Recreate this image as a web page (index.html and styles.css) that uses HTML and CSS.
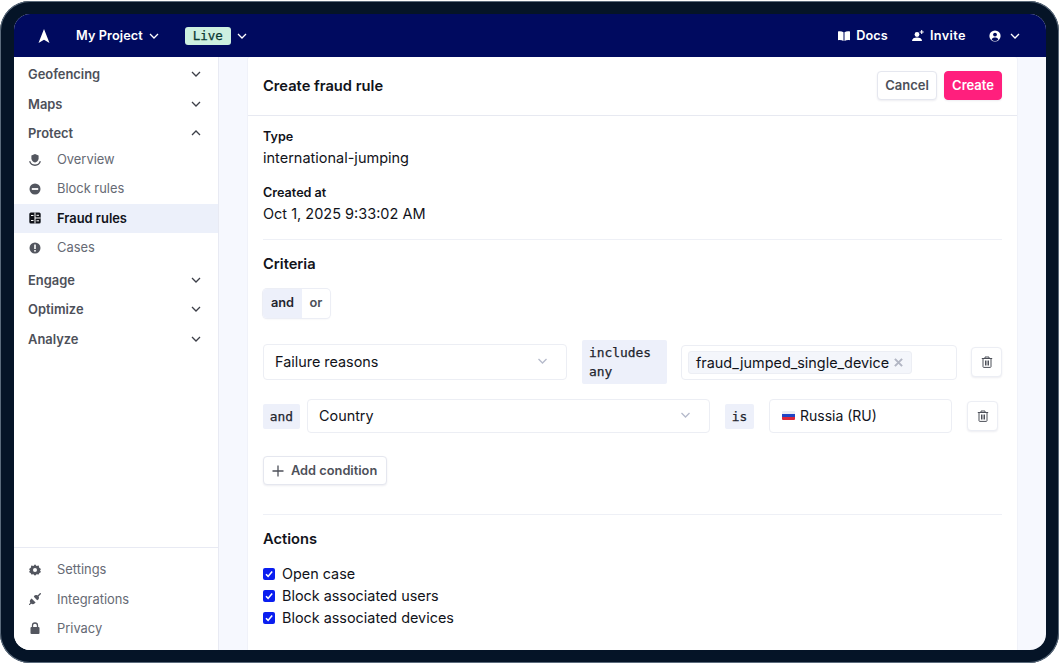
FILE: index.html
```html
<!DOCTYPE html>
<html lang="en">
<head>
<meta charset="utf-8">
<title>Create fraud rule</title>
<link rel="stylesheet" href="styles.css">
</head>
<body>
<div class="device">
  <div class="screen">
    <header class="topbar">
      <svg class="logo" viewBox="0 0 12 14" width="12" height="14"><path d="M6 0L11.500 14L6 10.800L.5 14Z" fill="#fff"/></svg>
      <span class="top-label project">My Project</span>
      <svg class="chev white" viewBox="0 0 10 6"><path d="M1 1l4 4 4-4"/></svg>
      <span class="live">Live</span>
      <svg class="chev white" viewBox="0 0 10 6"><path d="M1 1l4 4 4-4"/></svg>
      <span class="spacer"></span>
      <svg class="top-icon" viewBox="0 0 12 10" width="12" height="10"><path d="M0 .5C2 0 4 .3 5.500 1.200V10C4 9.200 2 8.900 0 9.300ZM12 .5C10 0 8 .3 6.500 1.200V10C8 9.200 10 8.900 12 9.300Z" fill="#fff"/></svg>
      <span class="top-label docs">Docs</span>
      <svg class="top-icon" viewBox="0 0 12 12" width="12" height="12"><circle cx="5" cy="4.500" r="2.400" fill="#fff"/><path d="M0 11c0-2.600 2.200-3.600 5-3.600s5 1 5 3.600Z" fill="#fff"/><path d="M9.700 0v4M7.700 2h4" stroke="#fff" stroke-width="1.100"/></svg>
      <span class="top-label invite">Invite</span>
      <svg class="top-icon user" viewBox="0 0 12 12" width="12" height="12"><circle cx="6" cy="6" r="5.600" fill="#fff"/><circle cx="6" cy="4.600" r="1.900" fill="#000a5f"/><path d="M2.600 9.500c.6-1.500 2-2 3.400-2s2.800.5 3.400 2A4.500 4.500 0 0 1 6 11a4.500 4.500 0 0 1-3.400-1.500Z" fill="#000a5f"/></svg>
      <svg class="chev white" viewBox="0 0 10 6"><path d="M1 1l4 4 4-4"/></svg>
    </header>
    <div class="body">
      <aside class="sidebar">
        <nav class="nav">
          <div class="group"><span>Geofencing</span><svg class="chev gray" viewBox="0 0 10 6"><path d="M1 1l4 4 4-4"/></svg></div>
          <div class="group tight"><span>Maps</span><svg class="chev gray" viewBox="0 0 10 6"><path d="M1 1l4 4 4-4"/></svg></div>
          <div class="group open"><span>Protect</span><svg class="chev gray" viewBox="0 0 10 6"><path d="M1 5l4-4 4 4"/></svg></div>
          <a class="item">
            <svg class="ni" viewBox="0 0 12 12"><path d="M6 0L9.600 1.400V4.500C9.600 6.400 8 7.800 6 8.600 4 7.800 2.400 6.400 2.400 4.500V1.400Z" fill="#53565f"/><path d="M.6 7.200C1.400 9.800 3.400 11.200 6 11.200S10.600 9.800 11.400 7.200" fill="none" stroke="#53565f" stroke-width="1.400"/></svg>
            <span>Overview</span></a>
          <a class="item">
            <svg class="ni" viewBox="0 0 12 12"><circle cx="6" cy="6" r="5.500" fill="#53565f"/><rect x="2.800" y="5.100" width="6.400" height="1.800" fill="#fff"/></svg>
            <span>Block rules</span></a>
          <a class="item active">
            <svg class="ni" viewBox="0 0 12 12"><rect x=".3" y=".5" width="11.400" height="11" rx="1.500" fill="#11131a"/><path d="M6 .5v11M6 6h5.700M2 3.500h2.500M7.500 3.300H10M7.500 8.800H10M2 8.500h2.500" stroke="#fff" stroke-width="1"/></svg>
            <span>Fraud rules</span></a>
          <a class="item last">
            <svg class="ni" viewBox="0 0 12 12"><circle cx="6" cy="6" r="5.500" fill="#53565f"/><rect x="5.200" y="2.500" width="1.600" height="4.500" fill="#fff"/><rect x="5.200" y="8" width="1.600" height="1.600" fill="#fff"/></svg>
            <span>Cases</span></a>
          <div class="group tight"><span>Engage</span><svg class="chev gray" viewBox="0 0 10 6"><path d="M1 1l4 4 4-4"/></svg></div>
          <div class="group"><span>Optimize</span><svg class="chev gray" viewBox="0 0 10 6"><path d="M1 1l4 4 4-4"/></svg></div>
          <div class="group"><span>Analyze</span><svg class="chev gray" viewBox="0 0 10 6"><path d="M1 1l4 4 4-4"/></svg></div>
        </nav>
        <div class="side-foot">
          <a class="item">
            <svg class="ni" viewBox="0 0 12 12"><path d="M6 .3l1.500 1.600 2.200-.3.500 2.100L12 5 11 6.500 12 8l-1.800 1.300-.5 1.100-2.200-.1L6 11.700 4.500 10.300l-2.200.1-.5-1.100L0 8l1-1.500L0 5l1.800-1.300.5-2.100 2.200.3Z" fill="#53565f"/><circle cx="6" cy="6" r="2" fill="#fff"/></svg>
            <span>Settings</span></a>
          <a class="item">
            <svg class="ni" viewBox="0 0 12 12"><path d="M0 12l2.500-2.500" stroke="#53565f" stroke-width="1.100"/><path d="M1.800 6.200a2.600 2.600 0 0 0 4 4l.8-.8-4-4Z" fill="#53565f"/><path d="M4.800 3.800L8.200 7.200a2.600 2.600 0 0 0 1-4.400 2.600 2.600 0 0 0-4.400 1Z" fill="#53565f"/><path d="M9 3l2.700-2.700" stroke="#53565f" stroke-width="1.300"/></svg>
            <span>Integrations</span></a>
          <a class="item">
            <svg class="ni" viewBox="0 0 12 12"><rect x="1.500" y="5" width="9" height="7" rx="1" fill="#53565f"/><path d="M3.500 5.500V3.500a2.500 2.500 0 0 1 5 0v2" fill="none" stroke="#53565f" stroke-width="1.300"/></svg>
            <span>Privacy</span></a>
        </div>
      </aside>
      <main class="main">
        <section class="card">
          <div class="card-head">
            <h1>Create fraud rule</h1>
            <div class="head-actions">
              <button class="btn cancel">Cancel</button>
              <button class="btn primary">Create</button>
            </div>
          </div>
          <div class="card-body">
            <div class="field-label">Type</div>
            <div class="field-value">international-jumping</div>
            <div class="field-label second">Created at</div>
            <div class="field-value">Oct 1, 2025 9:33:02 AM</div>
            <hr class="rule rule-a">
            <h2>Criteria</h2>
            <div class="toggle"><span class="on">and</span><span class="off">or</span></div>
            <div class="cond cond-1">
              <div class="select s1"><span>Failure reasons</span><svg class="chev pale" viewBox="0 0 10 6"><path d="M1 1l4 4 4-4"/></svg></div>
              <div class="op op-wide">includes any</div>
              <div class="input tags"><span class="tag">fraud_jumped_single_device<svg viewBox="0 0 8 8" width="9" height="9"><path d="M.8.8l6.400 6.400M7.200.8L.8 7.200"/></svg></span></div>
              <button class="trash"><svg viewBox="0 0 12 12" width="12" height="12"><path d="M.8 2.500h10.400M4 2.300V1h4v1.300M2 2.500v8.200c0 .4.300.7.700.7h6.600c.4 0 .7-.3.700-.7V2.500M4.500 4.500v5M6 4.500v5M7.500 4.500v5"/></svg></button>
            </div>
            <div class="cond cond-2">
              <div class="op and">and</div>
              <div class="select s2"><span>Country</span><svg class="chev pale" viewBox="0 0 10 6"><path d="M1 1l4 4 4-4"/></svg></div>
              <div class="op is">is</div>
              <div class="input country"><svg class="flag" viewBox="0 0 13 9" width="13" height="9"><rect width="13" height="3" fill="#e9edf4"/><rect y="3" width="13" height="3" fill="#1f44c4"/><rect y="6" width="13" height="3" fill="#d9263a"/></svg><span>Russia (RU)</span></div>
              <button class="trash"><svg viewBox="0 0 12 12" width="12" height="12"><path d="M.8 2.500h10.400M4 2.300V1h4v1.300M2 2.500v8.200c0 .4.300.7.700.7h6.600c.4 0 .7-.3.700-.7V2.500M4.500 4.500v5M6 4.500v5M7.500 4.500v5"/></svg></button>
            </div>
            <button class="btn add"><svg viewBox="0 0 12 12" width="12" height="12"><path d="M6 .5v11M.5 6h11"/></svg><span>Add condition</span></button>
            <hr class="rule rule-b">
            <h2 class="actions">Actions</h2>
            <label class="check"><span class="box"><svg viewBox="0 0 12 12" width="12" height="12"><path d="M3 6.300l2.100 2.100L9.200 3.600"/></svg></span>Open case</label>
            <label class="check"><span class="box"><svg viewBox="0 0 12 12" width="12" height="12"><path d="M3 6.300l2.100 2.100L9.200 3.600"/></svg></span>Block associated users</label>
            <label class="check"><span class="box"><svg viewBox="0 0 12 12" width="12" height="12"><path d="M3 6.300l2.100 2.100L9.200 3.600"/></svg></span>Block associated devices</label>
          </div>
        </section>
      </main>
    </div>
  </div>
</div>
</body>
</html>
```
FILE: styles.css
```css
* { box-sizing: border-box; }
html, body { margin: 0; height: 100%; background: #fff; overflow: hidden; }
body { font-family: Inter, "Liberation Sans", sans-serif; color: #11131a; }
.device {
  width: 1059px; height: 662px; margin-top: 1px;
  background: #051427; border-radius: 30px; padding: 13px 13px 13px 14px;
  box-shadow: inset 0 0 0 1px #5b6b7c;
}
.screen { height: 636px; border-radius: 16px; overflow: hidden; background: #f6f8fe; display: flex; flex-direction: column; }
.topbar { height: 43px; flex: none; background: #000a5f; display: flex; align-items: center; padding: 0 26px 0 24px; color: #fff; }
.logo { flex: none; }
.top-label { font-size: 12.700px; font-weight: 600; letter-spacing: .1px; }
.project { margin-left: 26px; }
.chev { width: 10px; height: 6px; flex: none; fill: none; stroke-width: 1.300; }
.chev.white { stroke: #fff; margin-left: 6px; }
.live { margin-left: 26px; width: 46px; height: 18px; background: #cdf0e0; border-radius: 3px; color: #0b3a33; font: 12.500px/18px "DejaVu Sans Mono", monospace; -webkit-text-stroke: .25px #0b3a33; text-align: center; }
.spacer { flex: 1; }
.top-icon { flex: none; }
.docs { margin-left: 6px; }
.top-icon + .invite { margin-left: 6px; letter-spacing: .4px; }
.docs + .top-icon { margin-left: 24px; }
.invite + .user { margin-left: 23px; }
.user + .chev { margin-left: 9px; }
.body { flex: 1; display: flex; min-height: 0; }
.sidebar { width: 205px; flex: none; background: #fff; border-right: 1px solid #e8eaf3; display: flex; flex-direction: column; justify-content: space-between; }
.nav { padding-top: 5px; }
.group { height: 24px; margin-bottom: 6px; display: flex; align-items: center; justify-content: space-between; padding: 0 17px 0 14px; font-size: 12.900px; font-weight: 600; color: #4d5059; }
.group.tight { margin-bottom: 5px; }
.group.open { margin-bottom: 0; }
.item { height: 29.300px; display: flex; align-items: center; padding-left: 15px; font-size: 12.900px; color: #666a74; }
.item.last { margin-bottom: 6px; }
.item.active { background: #ecf0fa; color: #11131a; font-weight: 600; }
.chev.gray { stroke: #3c3f48; }
.ni { width: 12px; height: 12px; flex: none; margin-right: 16px; }
.side-foot { border-top: 1px solid #e8eaf3; padding: 7px 0; }
.main { flex: 1; padding: 0 29px; min-width: 0; overflow: hidden; }
.card { background: #fff; border-radius: 3px 3px 0 0; box-shadow: 0 0 0 1px #f0f2f9; height: 100%; overflow: hidden; }
.card-head { height: 59px; border-bottom: 1px solid #e7e9f1; display: flex; align-items: center; justify-content: space-between; padding: 0 15px; }
h1 { margin: 0; font-size: 14.700px; font-weight: 600; }
.head-actions { display: flex; gap: 7px; margin-top: -2px; }
.btn { height: 29px; padding: 0; border: 1px solid #e5e7ef; border-radius: 4px; background: #fff; color: #4d5059; font: 600 13px Inter, sans-serif; box-shadow: 0 1px 2px rgba(20,30,80,.08); }
.cancel { width: 60px; }
.btn.primary { width: 58px; background: #ff1f7d; border-color: #ff1f7d; color: #fff; }
.card-body { padding: 13px 15px 0; }
.field-label { font-size: 12.600px; font-weight: 600; line-height: 15px; }
.field-value { font-size: 14.500px; line-height: 18px; margin-top: 5px; }
.field-label.second { margin-top: 18px; }
.rule { margin: 0; border: 0; border-top: 1px solid #eef0f6; }
.rule-a { margin-top: 16px; }
h2 { margin: 16px 0 0; font-size: 14.700px; font-weight: 600; line-height: 17px; }
.toggle { margin-top: 16px; display: inline-flex; height: 29px; border-radius: 4px; background: #fff; box-shadow: 0 0 0 1px #eceef5, 0 1px 2px rgba(20,30,80,.08); font-size: 12.800px; font-weight: 600; color: #4d5059; vertical-align: top; overflow: hidden; }
.toggle span { line-height: 28px; text-align: center; }
.toggle .on { width: 39px; background: #edf0fa; color: #23252e; }
.toggle .off { width: 28px; }
.cond { display: flex; align-items: center; }
.cond-1 { margin-top: 22px; height: 44px; }
.cond-2 { margin-top: 15px; height: 34px; }
.select { height: 36px; border: 1px solid #eceef4; border-radius: 4px; display: flex; align-items: center; justify-content: space-between; padding: 0 18px 2px 11px; font-size: 14.400px; background: #fff; }
.chev.pale { stroke: #b5bacb; width: 11px; height: 6px; }
.s1 { width: 304px; }
.s2 { width: 403px; height: 34px; margin-left: 7px; }
.op { background: #edf0fa; font: 12.900px/19px "DejaVu Sans Mono", "Liberation Mono", monospace; -webkit-text-stroke: .25px #23252e; color: #23252e; border-radius: 2px; }
.op-wide { width: 85px; height: 44px; margin-left: 15px; padding: 3px 7px; }
.and { width: 37px; height: 25px; line-height: 25px; text-align: center; }
.is { width: 29px; height: 25px; line-height: 25px; text-align: center; margin-left: 15px; }
.input { height: 35px; border: 1px solid #eceef4; border-radius: 4px; display: flex; align-items: center; font-size: 14.400px; background: #fff; }
.tags { width: 276px; margin-left: 14px; padding-left: 6px; }
.tag { height: 23px; display: flex; align-items: center; gap: 5px; background: #f4f6fb; border: 1px solid #eceef4; border-radius: 3px; padding: 0 8px 0 7px; }
.tag svg { fill: none; stroke: #b2b6c4; stroke-width: 1.800; }
.country { width: 183px; height: 34px; margin-left: 15px; padding: 0 0 2px 12px; gap: 5px; font-size: 14px; }
.flag { flex: none; border-radius: 1px; }
.trash { width: 31px; height: 30px; margin-left: 14px; padding: 0; border: 1px solid #eceef4; border-radius: 4px; background: #fff; box-shadow: 0 1px 2px rgba(20,30,80,.08); display: flex; align-items: center; justify-content: center; }
.country + .trash { margin-left: 15px; }
.trash svg { fill: none; stroke: #4d5059; stroke-width: 1; }
.add { margin-top: 23px; height: 29px; padding: 0 8px; display: inline-flex; align-items: center; gap: 7px; width: 124px; white-space: nowrap; font-size: 12.800px; }
.add svg { flex: none; fill: none; stroke: #4d5059; stroke-width: 1.300; }
.rule-b { margin-top: 29px; }
h2.actions { margin-top: 16px; }
.check { display: flex; align-items: center; font-size: 14.400px; height: 22px; }
.actions + .check { margin-top: 14px; }
.box { width: 12px; height: 12px; border-radius: 2px; background: #0a1ef0; margin: 2px 7px 0 0; display: block; }
.box svg { display: block; fill: none; stroke: #fff; stroke-width: 1.600; }
```
